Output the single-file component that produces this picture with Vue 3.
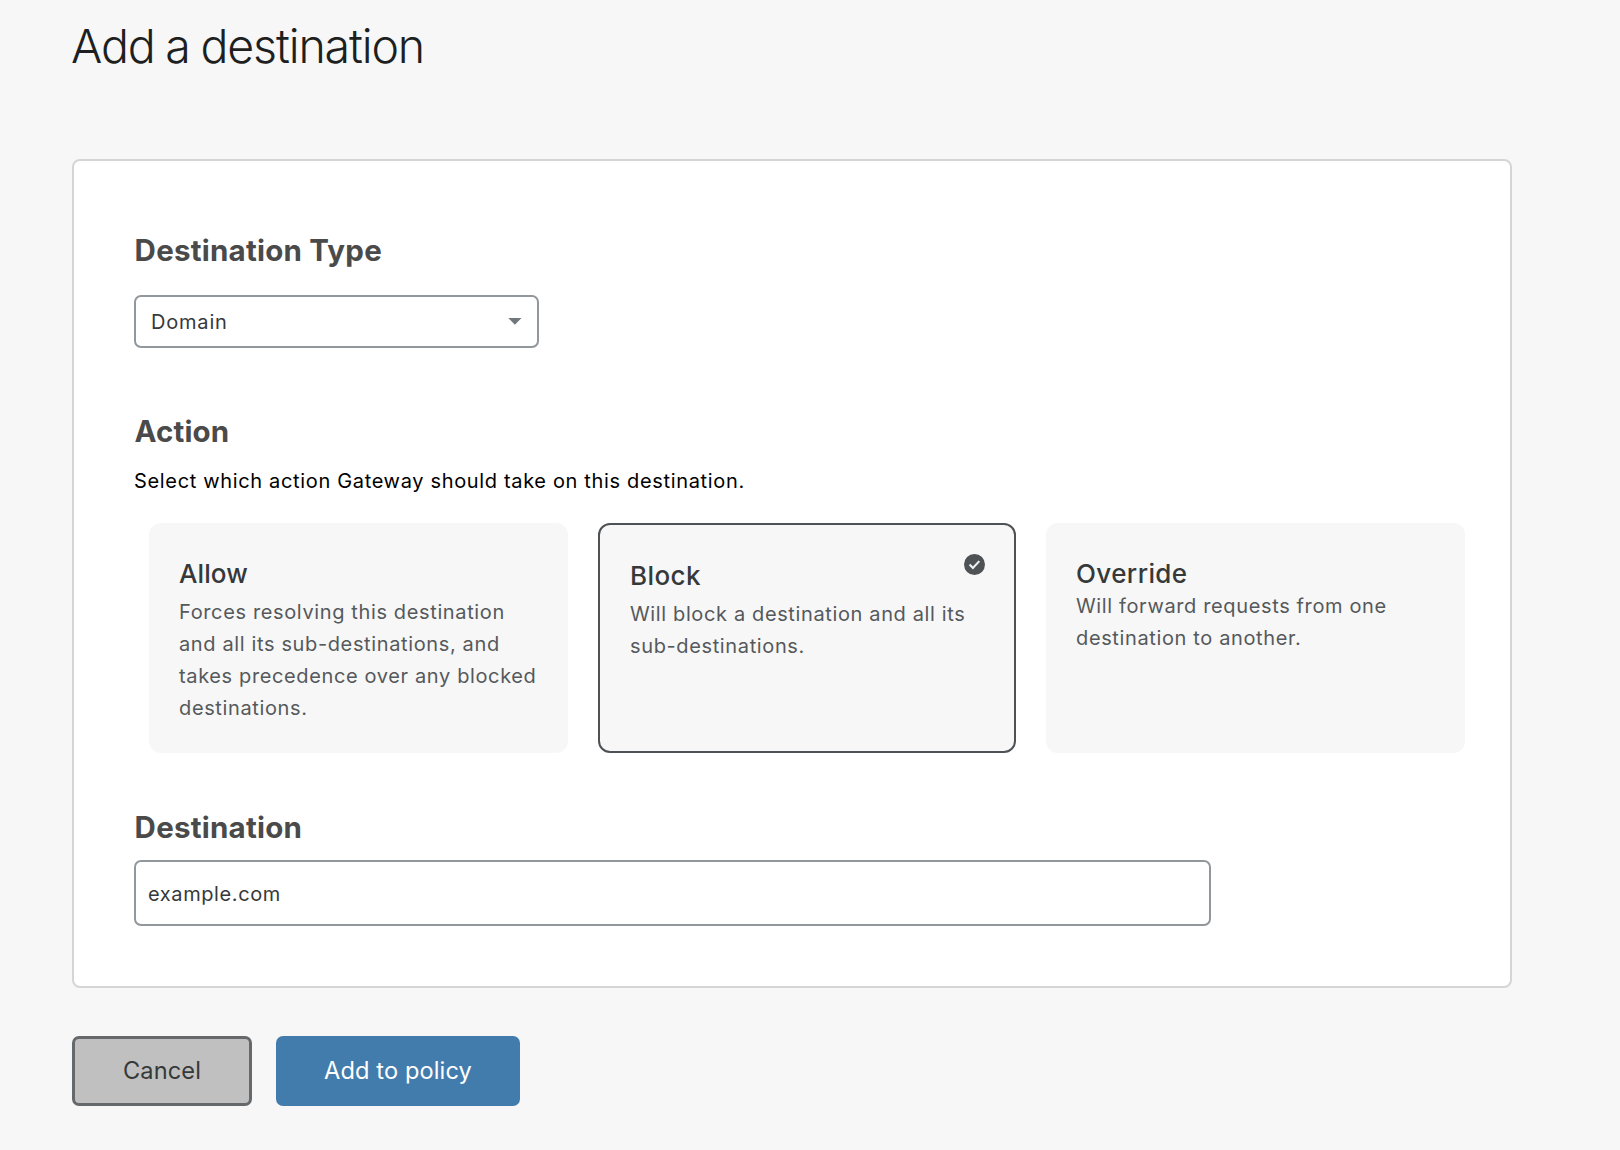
<script setup>
import { ref } from 'vue'

const selected = ref('block')
const destination = ref('example.com')

const actions = [
  {
    id: 'allow',
    title: 'Allow',
    lines: [
      'Forces resolving this destination',
      'and all its sub-destinations, and',
      'takes precedence over any blocked',
      'destinations.',
    ],
  },
  {
    id: 'block',
    title: 'Block',
    lines: ['Will block a destination and all its', 'sub-destinations.'],
  },
  {
    id: 'override',
    title: 'Override',
    lines: ['Will forward requests from one', 'destination to another.'],
  },
]
</script>

<template>
  <main class="page">
    <h1 class="title">Add a destination</h1>

    <section class="panel">
      <h2 class="heading">Destination Type</h2>
      <div class="select" role="combobox" tabindex="0">
        <span>Domain</span>
        <svg class="caret" width="14" height="7" viewBox="0 0 14 7">
          <path d="M0.3 0h13.2L6.9 6.8z" fill="#72777b" />
        </svg>
      </div>

      <h2 class="heading action-heading">Action</h2>
      <p class="hint">Select which action Gateway should take on this destination.</p>

      <div class="cards">
        <article
          v-for="action in actions"
          :key="action.id"
          class="card"
          :class="[action.id, { selected: action.id === selected }]"
          @click="selected = action.id"
        >
          <h3 class="card-title">{{ action.title }}</h3>
          <p class="card-text">
            <span v-for="line in action.lines" :key="line" class="line">{{ line }}</span>
          </p>
          <svg v-if="action.id === selected" class="check" width="21" height="21" viewBox="0 0 21 21">
            <circle cx="10.5" cy="10.5" r="10.5" fill="#4e5255" />
            <path d="M5.6 10.5l3.3 3.4 6.4-6.8" fill="none" stroke="#f0f0f0" stroke-width="2.1" />
          </svg>
        </article>
      </div>

      <h2 class="heading destination-heading">Destination</h2>
      <input v-model="destination" class="input" type="text" />
    </section>

    <div class="buttons">
      <button class="button cancel" type="button">Cancel</button>
      <button class="button primary" type="button">Add to policy</button>
    </div>
  </main>
</template>

<style>
body {
  margin: 0;
  background: #f7f7f7;
}
</style>

<style scoped>
.page {
  box-sizing: border-box;
  min-height: 1150px;
  padding: 16px 108px 0 72px;
  background: #f7f7f7;
  font-family: Inter, 'Liberation Sans', sans-serif;
  font-size: 20px;
  letter-spacing: 0.63px;
}

.title {
  margin: 0 0 83px -1px;
  color: #1d1f20;
  font-size: 46.5px;
  font-weight: 300;
  line-height: 60px;
  letter-spacing: -1.15px;
  word-spacing: -1.2px;
}

.panel {
  box-sizing: border-box;
  height: 829px;
  padding: 71px 45px 0 60px;
  border: 2px solid #d5d5d5;
  border-radius: 8px;
  background: #fff;
}

.heading {
  margin: 0;
  padding-left: 0.6px;
  color: #4a4a4a;
  font-size: 29.5px;
  font-weight: 700;
  line-height: 36px;
  letter-spacing: 0.23px;
}

.select {
  box-sizing: border-box;
  display: flex;
  align-items: center;
  justify-content: space-between;
  width: 405px;
  height: 53px;
  margin-top: 27px;
  padding: 0 15px;
  border: 2px solid #92979b;
  border-radius: 7px;
  color: #36393a;
  letter-spacing: 0.8px;
}

.action-heading {
  margin-top: 65px;
  letter-spacing: 0.1px;
}

.hint {
  margin: 16px 0 0;
  color: #000;
  line-height: 32px;
  letter-spacing: 0.66px;
}

.cards {
  display: grid;
  grid-template-columns: 419px 418px 419px;
  column-gap: 30px;
  height: 230px;
  margin: 26px 0 0 15px;
}

.card {
  position: relative;
  padding: 35px 30px 0;
  border-radius: 12px;
  background: #f7f7f7;
}

.card.selected {
  border: 2px solid #4e5255;
}

.card-title {
  margin: 0 0 6px;
  color: #36393a;
  font-size: 26px;
  font-weight: 500;
  line-height: 32px;
  letter-spacing: 0.4px;
}

.allow .card-title {
  letter-spacing: 0.1px;
}

.override .card-title {
  margin-bottom: 0;
}

.card-text {
  margin: 0;
  color: #55595c;
  line-height: 32px;
}

.line {
  display: block;
  white-space: nowrap;
}

.check {
  position: absolute;
  top: 29px;
  right: 29px;
}

.destination-heading {
  margin-top: 56px;
}

.input {
  box-sizing: border-box;
  display: block;
  width: 1077px;
  height: 66px;
  margin-top: 15px;
  padding: 1px 12px 0;
  border: 2px solid #92979b;
  border-radius: 7px;
  outline: none;
  background: #fff;
  color: #36393a;
  font: inherit;
  letter-spacing: 0.6px;
}

.buttons {
  display: flex;
  gap: 24px;
  margin-top: 48px;
}

.button {
  box-sizing: border-box;
  height: 70px;
  padding: 0 0 2px;
  border: none;
  border-radius: 7px;
  font-family: inherit;
  font-size: 23.6px;
  letter-spacing: 0.12px;
}

.cancel {
  width: 180px;
  border: 3px solid #65696c;
  background: #c0c0c0;
  color: #36393a;
}

.primary {
  width: 244px;
  background: #427cac;
  color: #fff;
}
</style>
